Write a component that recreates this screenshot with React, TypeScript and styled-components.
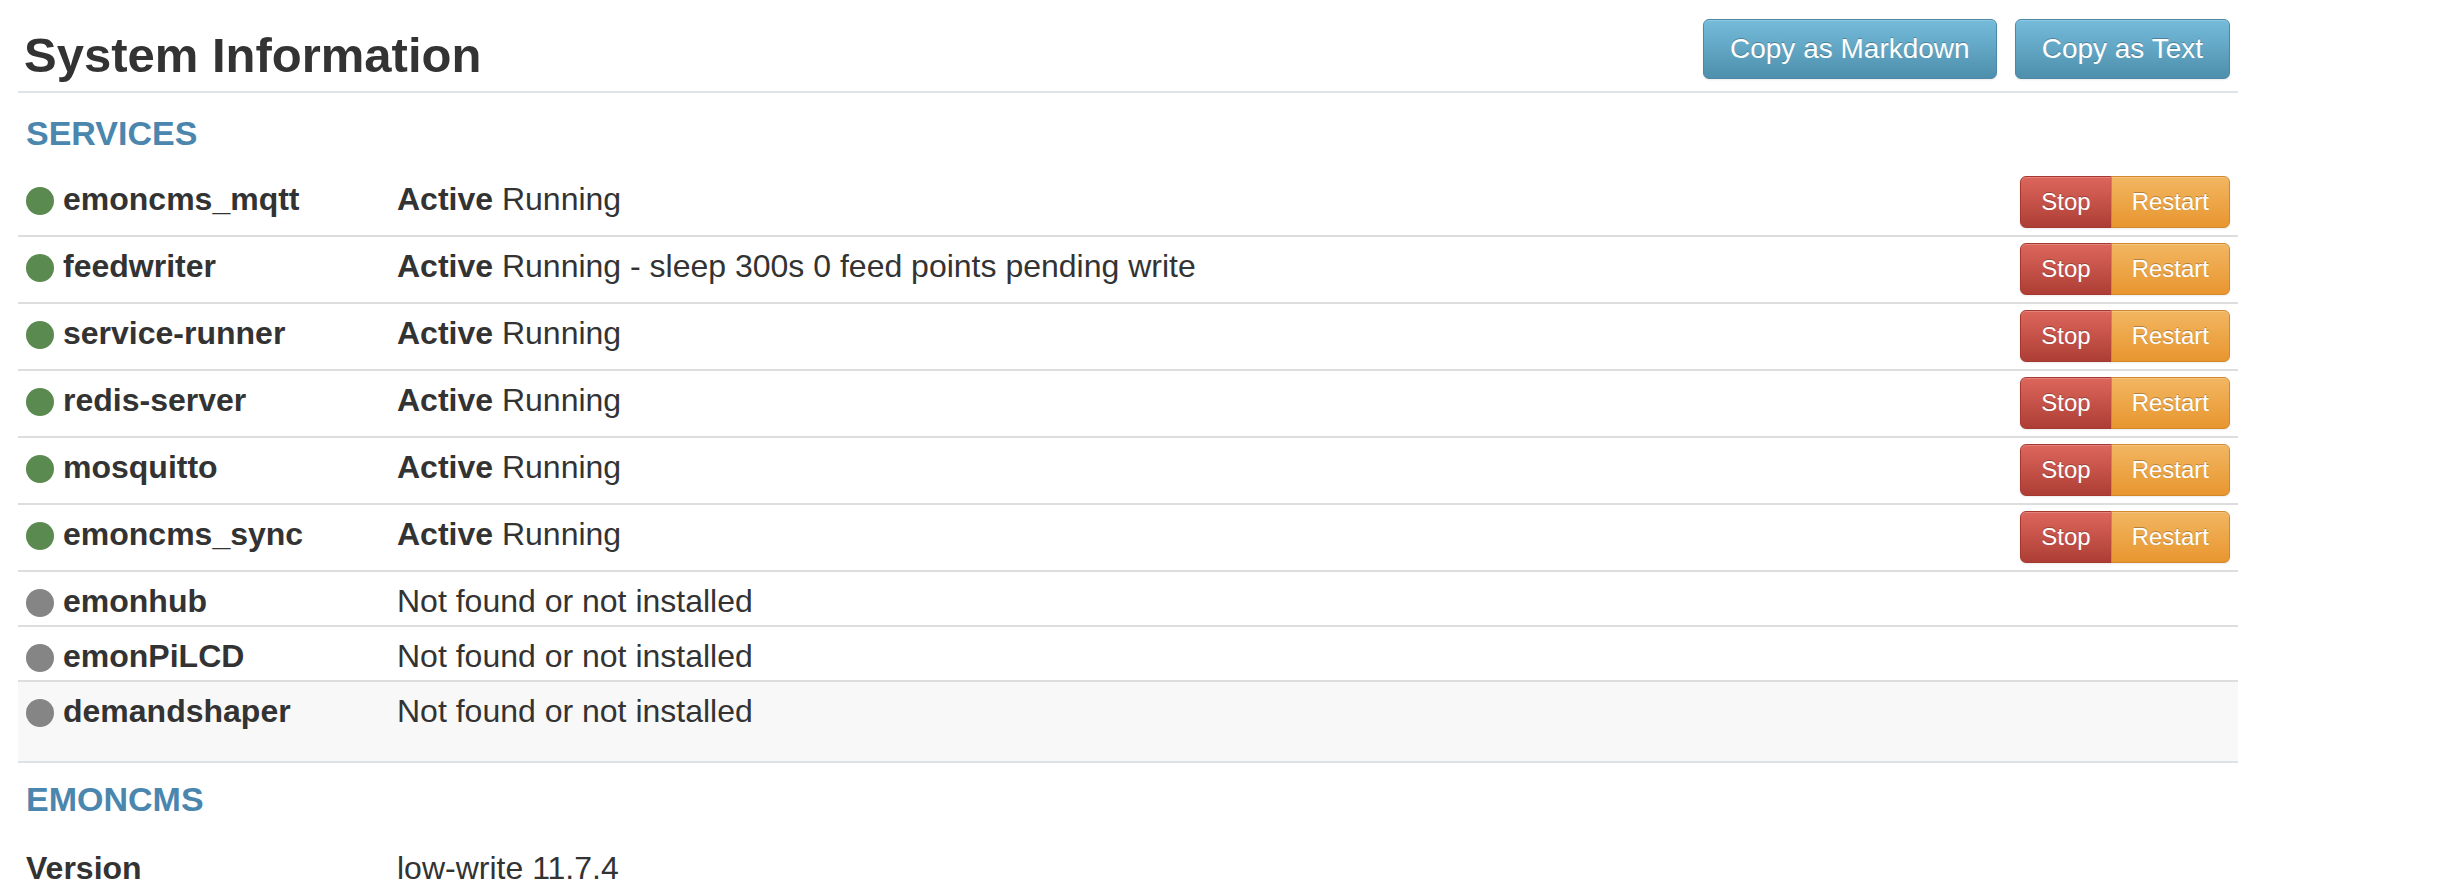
import React from 'react';
import styled, { createGlobalStyle } from 'styled-components';

type Service = {
    name: string;
    running: boolean;
    detail?: string;
    tall?: boolean;
};

const services: Service[] = [
    { name: 'emoncms_mqtt', running: true, detail: 'Running' },
    { name: 'feedwriter', running: true, detail: 'Running - sleep 300s 0 feed points pending write' },
    { name: 'service-runner', running: true, detail: 'Running' },
    { name: 'redis-server', running: true, detail: 'Running' },
    { name: 'mosquitto', running: true, detail: 'Running' },
    { name: 'emoncms_sync', running: true, detail: 'Running' },
    { name: 'emonhub', running: false },
    { name: 'emonPiLCD', running: false },
    { name: 'demandshaper', running: false, tall: true },
];

const GlobalStyle = createGlobalStyle`
    body {
        margin: 0;
        background: #fff;
        color: #333;
        font-family: "Liberation Sans", Arial, Helvetica, sans-serif;
    }
`;

const Page = styled.div`
    margin-left: 18px;
    width: 2220px;
`;

const Header = styled.div`
    display: flex;
    justify-content: space-between;
    align-items: flex-start;
    padding: 19px 8px 0;
    border-bottom: 2px solid #dfe3e7;
`;

const Title = styled.h2`
    margin: 0 0 0 -2px;
    font-size: 49px;
    line-height: 72px;
    font-weight: 700;
    color: #333;
`;

const Actions = styled.div`
    display: flex;
    gap: 18px;
`;

const CopyButton = styled.button`
    height: 60px;
    padding: 0 26px;
    font-family: inherit;
    font-size: 28px;
    line-height: 58px;
    color: #fff;
    text-shadow: 0 -1px 0 rgba(0, 0, 0, 0.25);
    background: linear-gradient(to bottom, #75bcda, #4d8fad);
    border: 1px solid #4b89a7;
    border-radius: 6px;
    box-shadow: inset 0 1px 0 rgba(255, 255, 255, 0.2), 0 1px 2px rgba(0, 0, 0, 0.08);
    cursor: pointer;
`;

const SectionTitle = styled.h4<{ $top?: number; $bottom?: number }>`
    margin: ${({ $top = 20 }) => $top}px 8px ${({ $bottom = 17 }) => $bottom}px;
    font-size: 34px;
    line-height: 40px;
    font-weight: 700;
    color: #4a86ad;
    text-transform: uppercase;
`;

const Table = styled.div`
    border-bottom: 2px solid #dde2e6;
`;

const Row = styled.div<{ $shaded?: boolean }>`
    display: grid;
    grid-template-columns: 371px 1fr auto;
    background: ${({ $shaded }) => ($shaded ? '#f8f8f8' : '#fff')};

    &:not(:last-child) {
        border-bottom: 2px solid #dddddd;
    }
`;

const Cell = styled.div<{ $tall?: boolean }>`
    display: flex;
    align-items: flex-start;
    padding: 14px 8px ${({ $tall }) => ($tall ? '35px' : '9px')};
    font-size: 32px;
    line-height: 30px;
    white-space: nowrap;
`;

const NameCell = styled(Cell)`
    font-weight: 700;
    gap: 9px;
`;

const Dot = styled.span<{ $on: boolean }>`
    flex: none;
    width: 28px;
    height: 28px;
    margin: 3px 0 -1px;
    border-radius: 50%;
    background: ${({ $on }) => ($on ? '#5a8a4f' : '#858585')};
`;

const Strong = styled.b`
    font-weight: 700;
`;

const ActionCell = styled.div`
    display: flex;
    justify-content: flex-end;
    align-items: flex-start;
    padding: 6px 8px 7px;
`;

const GroupButton = styled.button<{ $kind: 'stop' | 'restart' }>`
    height: 52px;
    padding: 0 20px;
    font-family: inherit;
    font-size: 24px;
    line-height: 50px;
    color: #fff;
    text-shadow: 0 -1px 0 rgba(0, 0, 0, 0.25);
    cursor: pointer;
    box-shadow: inset 0 1px 0 rgba(255, 255, 255, 0.2), 0 1px 2px rgba(0, 0, 0, 0.08);
    background: ${({ $kind }) =>
        $kind === 'stop'
            ? 'linear-gradient(to bottom, #dd665c, #ad3e35)'
            : 'linear-gradient(to bottom, #f2b661, #e8962f)'};
    border: 1px solid ${({ $kind }) => ($kind === 'stop' ? '#a6392f' : '#d2892c')};
    border-radius: ${({ $kind }) => ($kind === 'stop' ? '6px 0 0 6px' : '0 6px 6px 0')};
    ${({ $kind }) => ($kind === 'restart' ? 'margin-left: -1px;' : '')}
`;

const ServiceRow: React.FC<{ service: Service; shaded?: boolean }> = ({ service, shaded }) => (
    <Row $shaded={shaded}>
        <NameCell $tall={service.tall}>
            <Dot $on={service.running} />
            {service.name}
        </NameCell>
        <Cell $tall={service.tall}>
            {service.running ? (
                <span>
                    <Strong>Active</Strong> {service.detail}
                </span>
            ) : (
                'Not found or not installed'
            )}
        </Cell>
        <ActionCell>
            {service.running && (
                <>
                    <GroupButton $kind="stop">Stop</GroupButton>
                    <GroupButton $kind="restart">Restart</GroupButton>
                </>
            )}
        </ActionCell>
    </Row>
);

const App: React.FC = () => {
    return (
        <Page>
            <GlobalStyle />
            <Header>
                <Title>System Information</Title>
                <Actions>
                    <CopyButton>Copy as Markdown</CopyButton>
                    <CopyButton>Copy as Text</CopyButton>
                </Actions>
            </Header>

            <SectionTitle>Services</SectionTitle>
            <Table>
                {services.map((s) => (
                    <ServiceRow key={s.name} service={s} shaded={s.tall} />
                ))}
            </Table>

            <SectionTitle $top={16} $bottom={20}>Emoncms</SectionTitle>
            <Row>
                <NameCell>Version</NameCell>
                <Cell>low-write 11.7.4</Cell>
            </Row>
        </Page>
    );
};

export default App;
